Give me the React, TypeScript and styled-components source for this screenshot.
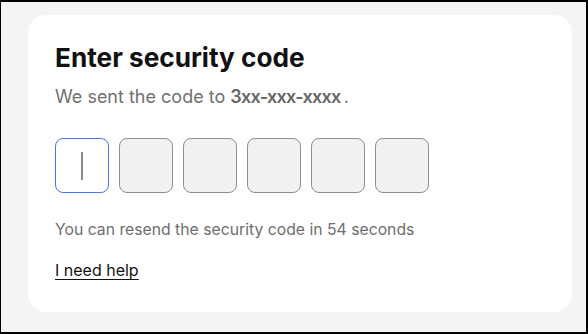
import React from 'react'
import styled, { createGlobalStyle } from 'styled-components'

const GlobalStyle = createGlobalStyle`
  html, body {
    margin: 0;
    padding: 0;
  }
  body {
    font-family: Inter, "Noto Sans", "Liberation Sans", sans-serif;
    background: #f4f4f4;
  }
`

const CODE_LENGTH = 6

export default function App() {
  return (
    <>
      <GlobalStyle />
      <Frame>
        <Card>
          <Title>Enter security code</Title>
          <Subtitle>
            We sent the code to <Phone>3xx-xxx-xxxx</Phone>
            <Dot>.</Dot>
          </Subtitle>
          <CodeRow>
            {Array.from({ length: CODE_LENGTH }).map((_, i) => (
              <CodeBox key={i} active={i === 0}>
                {i === 0 && <Caret />}
              </CodeBox>
            ))}
          </CodeRow>
          <Resend>You can resend the security code in 54 seconds</Resend>
          <HelpLink href="#">I need help</HelpLink>
        </Card>
      </Frame>
    </>
  )
}

const Frame = styled.div`
  box-sizing: border-box;
  width: 588px;
  height: 334px;
  border: 2px solid #000;
  border-left-width: 1px;
  background: #f4f4f4;
  padding: 13px 14px 20px 27px;
`

const Card = styled.div`
  box-sizing: border-box;
  height: 297px;
  background: #fff;
  border-radius: 18px;
  padding: 27px 27px 0 27px;
  display: flex;
  flex-direction: column;
`

const Title = styled.h1`
  margin: 0;
  font-size: 26.2px;
  line-height: 31px;
  font-weight: 700;
  color: #111;
`

const Subtitle = styled.p`
  margin: 12px 0 0;
  font-size: 18px;
  line-height: 24px;
  color: #707070;
`

const Phone = styled.span`
  font-weight: 600;
  color: #666;
  letter-spacing: -0.7px;
`

const Dot = styled.span`
  margin-left: 3px;
`

const CodeRow = styled.div`
  display: flex;
  gap: 10px;
  margin-top: 29px;
`

const CodeBox = styled.div<{ active?: boolean }>`
  box-sizing: border-box;
  width: 54px;
  height: 55px;
  border-radius: 8px;
  border: 1px solid ${p => (p.active ? '#4a72f5' : '#8f8f8f')};
  background: ${p => (p.active ? '#fff' : '#f1f1f1')};
  display: flex;
  align-items: center;
  justify-content: center;
`

const Caret = styled.div`
  width: 1.5px;
  height: 28px;
  background: #8a8a8a;
`

const Resend = styled.p`
  margin: 27px 0 0;
  font-size: 15.75px;
  line-height: 20px;
  color: #6e6e6e;
`

const HelpLink = styled.a`
  margin-top: 20px;
  align-self: flex-start;
  font-size: 16px;
  line-height: 20px;
  color: #111;
  text-decoration: underline;
  text-underline-offset: 3px;
`
